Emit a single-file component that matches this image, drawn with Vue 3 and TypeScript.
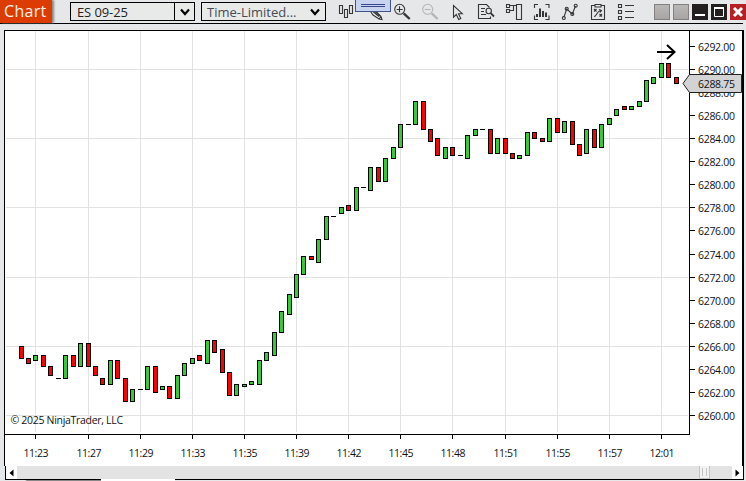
<script setup lang="ts">
type Candle = { x: number; top: number; bottom: number; kind: 'g' | 'r' | 'd' }

// Each entry: left edge, top edge, bottom edge, kind (g = up, r = down, d = flat)
const source = `19 346 359 r,26 358 364 r,33 355 361 g,41 355 367 r,48 366 376 r,56 378 379 d,63 355 379 g,71 355 367 r,
78 343 367 g,86 343 367 r,93 366 376 r,100 378 385 r,108 360 385 g,115 360 379 r,123 378 402 r,130 389 402 g,138 389 390 d,
145 366 390 g,153 366 393 r,160 386 390 g,167 386 399 r,175 375 399 g,182 363 376 g,190 358 364 g,197 355 361 r,205 340 364 g,
212 340 353 r,220 349 373 r,227 372 396 r,234 384 396 g,242 384 387 g,249 381 385 g,257 360 385 g,264 352 361 g,272 332 356 g,
279 311 333 g,287 294 315 g,294 274 298 g,301 256 275 g,309 256 260 r,316 239 263 g,324 216 240 g,331 216 217 d,339 207 214 g,
346 205 211 r,354 187 211 g,361 187 188 d,368 167 191 g,376 167 182 r,383 158 182 g,391 147 159 g,398 124 148 g,406 124 125 d,
413 101 125 g,421 101 130 r,428 129 142 r,435 138 156 r,443 147 159 g,450 147 156 r,458 155 156 d,465 135 159 g,473 129 136 g,
480 129 130 d,488 129 154 r,495 138 154 g,503 138 154 r,510 153 159 r,517 155 159 g,525 132 156 g,532 132 139 r,540 138 142 r,
547 118 142 g,555 118 133 r,562 121 133 g,570 121 145 r,577 144 156 r,584 129 154 g,592 129 148 r,599 124 148 g,607 118 125 g,
614 109 116 g,622 106 110 r,629 106 110 g,637 101 107 g,644 80 102 g,651 77 84 g,659 63 78 g,666 63 78 r,674 77 84 r`

const candles: Candle[] = source.split(',').map((row) => {
  const [x, top, bottom, kind] = row.trim().split(' ')
  return { x: +x, top: +top, bottom: +bottom, kind: kind as Candle['kind'] }
})

const times = [
  ['11:23', 35], ['11:27', 88], ['11:29', 140], ['11:33', 192], ['11:35', 244], ['11:39', 296], ['11:42', 348],
  ['11:45', 400], ['11:48', 452], ['11:51', 505], ['11:55', 557], ['11:57', 609], ['12:01', 661],
].map(([label, x]) => ({ label: String(label), x: Number(x) }))

const prices = Array.from({ length: 17 }, (_, i) => ({
  label: (6292 - i * 2).toFixed(2),
  y: Math.round(46 + i * 23.06),
}))
const gridRows = [69, 138, 207, 277, 346, 415]
</script>

<template>
  <div class="window">
    <header class="toolbar">
      <div class="title">Chart</div>
      <div class="select instrument">
        <span class="value">ES 09-25</span>
        <span class="caret"><svg width="12" height="10" viewBox="0 0 12 10"><path d="M2 2.5 6 7 10 2.5" /></svg></span>
      </div>
      <div class="select interval">
        <span class="value">Time-Limited...</span>
        <span class="caret"><svg width="12" height="10" viewBox="0 0 12 10"><path d="M2 2.5 6 7 10 2.5" /></svg></span>
      </div>
      <nav class="tools">
        <svg viewBox="0 0 20 20"><path d="M3.5 3.5h3v8h-3zM8.5 7.5h3v8h-3zM13.5 3.5h3v8h-3z" /></svg>
        <svg viewBox="0 0 20 20"><path d="M6.500 9.500 9 13l6 4 3 .500-1-3-5.500-5.500M9 9.500l6 5M15 17l2-2.500" /><path d="M11 9.500l5 4.500" /></svg>
        <svg viewBox="0 0 20 20"><circle cx="7.700" cy="7.300" r="5" /><path d="M4.700 7.500h6M7.500 4.300v6" /><path class="handle" d="M11.700 11.300l6 5.700" /></svg>
        <svg class="off" viewBox="0 0 20 20"><circle cx="7.700" cy="7.300" r="5" /><path d="M4.700 7.500h6" /><path class="handle" d="M11.700 11.300l6 5.700" /></svg>
        <svg viewBox="0 0 20 20"><path d="M5.500 3.500v11.700l2.800-2.700 2.400 5 2.100-1-2.300-4.800h3.800z" /></svg>
        <svg viewBox="0 0 20 20"><path d="M13.500 5.500 10.500 2.500h-8v14h12v-2M5 6.500h4M5 9.500h3M5 12.500h5" /><circle cx="12.700" cy="9" r="2.700" /><path class="thick" d="M14.700 11.200l3.300 3.300" /></svg>
        <svg viewBox="0 0 20 20"><path d="M12.500 2.500h5v15h-5zM2.500 2.500h3v3h-3zM2.500 7.500h3v3h-3zM6 3.500h6.500M6 8.500h3.500v-5" /></svg>
        <svg viewBox="0 0 20 20"><path d="M6 2.500H2.500V6M13.500 2.500H17V6M2.500 13.500v4H6M17 13.500v4h-3.500" /><path class="bars" d="M5 15v-3M8 15V6.500M11 15V9M14 15v-4.500" /></svg>
        <svg viewBox="0 0 20 20"><path d="M3.800 15.500 6.700 7 12.300 12 15.500 4" /><circle cx="3.800" cy="16" r="1.500" /><circle cx="6.700" cy="6.800" r="1.500" /><circle cx="12.300" cy="12" r="1.500" /><circle cx="15.700" cy="3.800" r="1.500" /></svg>
        <svg viewBox="0 0 20 20"><path d="M7 3.500H3.500v14h13v-14H13M7 2.500h6v2.500H7zM6 7l2.500 2.500M8.500 7 6 9.500M11.500 12l2.500 2.500M14 12l-2.500 2.500M6 14.500c3 0 2-5 7-6M11 7.500l2.500 1-1.500 2" /></svg>
        <svg viewBox="0 0 20 20"><path d="M2.500 2.500h3v3h-3zM2.500 8.500h3v3h-3zM2.500 14.500h3v3h-3zM9 3.500h9M9 9.500h9M9 15.500h9" /></svg>
      </nav>
      <div class="buttons">
        <i class="blank"></i>
        <i class="blank"></i>
        <i class="dark"><svg viewBox="0 0 16 16"><path d="M3 11h10" /></svg></i>
        <i class="dark"><svg viewBox="0 0 16 16"><path class="max" d="M3.500 4h9v8.500h-9z" /><path d="M3 4h10" /></svg></i>
        <i class="close"><svg viewBox="0 0 16 16"><path class="cross" d="M4 4l8 8M12 4l-8 8" /></svg></i>
      </div>
      <div class="grip"></div>
    </header>

    <svg class="chart" width="746" height="442" viewBox="0 24 746 442">
      <rect x="4" y="30" width="740" height="436" fill="#000" />
      <rect x="5" y="31" width="737" height="435" fill="#fff" />
      <g fill="#e2e2e2">
        <rect v-for="t in times" :key="t.label" :x="t.x" y="31" width="1" height="401" />
        <rect v-for="y in gridRows" :key="y" x="6" :y="y" width="682" height="1" />
      </g>
      <g fill="#000">
        <rect x="5" y="434" width="685" height="1" />
        <rect x="689" y="31" width="1" height="404" />
        <rect v-for="t in times" :key="t.label" :x="t.x" y="435" width="1" height="4" />
        <rect v-for="p in prices" :key="p.label" x="690" :y="p.y" width="5" height="1" />
      </g>
      <g class="labels">
        <text v-for="p in prices" :key="p.label" x="698" :y="p.y + 4.5" textLength="37">{{ p.label }}</text>
        <text v-for="t in times" :key="t.label" :x="t.x - 11.5" y="457" textLength="25">{{ t.label }}</text>
        <text x="10.500" y="424" textLength="112.500">© 2025 NinjaTrader, LLC</text>
      </g>
      <g v-for="c in candles" :key="c.x">
        <rect :x="c.x" :y="c.top" width="5" :height="c.bottom - c.top" fill="#000" />
        <rect
          v-if="c.kind !== 'd'"
          :x="c.x + 1"
          :y="c.top + 1"
          width="3"
          :height="c.bottom - c.top - 2"
          :fill="c.kind === 'g' ? '#32cd32' : '#ff0000'"
        />
      </g>
      <path d="M657 52h17M667 45l7.500 7-7.500 7" fill="none" stroke="#000" stroke-width="2" />
      <path d="M683 83.500 689.500 74.500H741.500V92.500H689.500z" fill="#d3d3d3" stroke="#222" />
      <text class="price" x="698" y="88" textLength="37">6288.75</text>
    </svg>

    <footer class="scroll">
      <span class="arrow"><svg width="5" height="8" viewBox="0 0 5 8"><path d="M4.500.500v7L.500 4z" /></svg></span>
      <span class="track"><span class="thumb"></span></span>
      <span class="arrow right"><svg width="5" height="8" viewBox="0 0 5 8"><path d="M.500.500v7L4.500 4z" /></svg></span>
    </footer>
    <div class="tabs"><span class="tab-gap left"></span><span class="tab-active"></span><span class="tab-gap"></span></div>
  </div>
</template>

<style>
body {
  margin: 0;
  overflow: hidden;
}
</style>

<style scoped>
.window {
  width: 746px;
  height: 481px;
  background: #e6e7e8;
  overflow: hidden;
}
.toolbar {
  position: relative;
  display: flex;
  align-items: flex-start;
  box-sizing: border-box;
  height: 24px;
  background: linear-gradient(#000, #000) 0 23px / 743px 1px no-repeat, #e6e7e8;
}
.title {
  box-sizing: border-box;
  width: 52px;
  height: 23px;
  margin-right: 18px;
  padding-left: 4px;
  background: #dc3c00;
  box-shadow: 2px 0 2px #888;
  color: #fff4ea;
  font: 400 16px/23px "Open Sans", sans-serif;
  letter-spacing: 0.3px;
}
.select {
  display: flex;
  box-sizing: border-box;
  height: 19px;
  margin-top: 2px;
  border: 1px solid #000;
  background: #e8eaea;
  color: #222;
  font: 400 13px/18px "Open Sans", sans-serif;
}
.value {
  flex: 1;
  padding-left: 5px;
  white-space: nowrap;
}
.instrument {
  width: 125px;
  margin-right: 6px;
}
.instrument .value {
  padding-left: 6px;
  letter-spacing: -0.1px;
}
.interval {
  width: 125px;
  margin-right: 6px;
}
.interval .value {
  color: #454b54;
}
.caret {
  display: flex;
  width: 19px;
  align-items: center;
  justify-content: center;
}
.instrument .caret {
  border-left: 1px solid #000;
}
.interval .caret {
  width: 20px;
}
.caret path {
  fill: none;
  stroke: #000;
  stroke-width: 2.2;
}
.tools {
  display: grid;
  grid-template-columns: repeat(11, 28px);
  justify-items: center;
  padding-top: 2px;
  margin-right: 14px;
}
.tools svg {
  width: 20px;
  height: 20px;
  fill: none;
  stroke: #363636;
  stroke-width: 1.1;
}
.tools .off {
  stroke: #b5b5b5;
}
.tools .handle {
  stroke-width: 2.4;
}
.tools .thick {
  stroke-width: 1.8;
}
.tools .bars {
  stroke-width: 2;
}
.buttons {
  display: flex;
  gap: 3px;
  padding-top: 4px;
}
.buttons i {
  box-sizing: border-box;
  width: 16px;
  height: 16px;
  flex: none;
}
.buttons svg {
  display: block;
  width: 16px;
  height: 16px;
  fill: none;
  stroke: #fff;
  stroke-width: 2;
}
.buttons .max {
  stroke-width: 1;
}
.buttons .cross {
  stroke-width: 3;
}
.blank {
  border: 1px solid #858080;
  background: linear-gradient(#bab7b7, #a8a4a4);
}
.dark {
  background: #231f20;
}
.close {
  background: #b81f24;
}
.grip {
  position: absolute;
  left: 355px;
  top: 0;
  box-sizing: border-box;
  width: 36px;
  height: 12px;
  border: 1px solid #405487;
  border-top: 0;
  background: linear-gradient(#34488a, #34488a) 5px 4px / 24px 1px no-repeat,
    linear-gradient(#34488a, #34488a) 5px 6px / 24px 1px no-repeat, #c8d4ef;
}
.chart {
  display: block;
}
.labels text,
.price {
  fill: #111;
  font: 10.5px "Open Sans", sans-serif;
}
.scroll {
  display: flex;
  box-sizing: border-box;
  width: 739px;
  height: 13px;
  margin-left: 5px;
  border-left: 1px solid #000;
  border-right: 1px solid #000;
}
.arrow {
  display: flex;
  width: 11px;
  align-items: center;
  justify-content: center;
  background: #fff;
}
.track {
  display: flex;
  flex: 1;
  justify-content: flex-end;
  background: #e3e3e3;
}
.thumb {
  box-sizing: border-box;
  width: 11px;
  margin-right: 22px;
  border: 1px solid #c4c4c4;
  border-top: 0;
  background: linear-gradient(90deg, transparent 2px, #c4c4c4 2px 3px, transparent 3px 6px, #c4c4c4 6px 7px, transparent 7px) 0 2px / 9px 8px no-repeat, #f2f2f2;
}
.tabs {
  display: flex;
  height: 2px;
  padding-left: 5px;
}
.tab-gap {
  box-sizing: border-box;
  width: 569px;
  border-top: 1px solid #000;
}
.tab-gap.left {
  width: 96px;
  background: linear-gradient(90deg, transparent 20px, #888 22px);
}
.tab-active {
  width: 74px;
  background: #fff;
}
</style>
